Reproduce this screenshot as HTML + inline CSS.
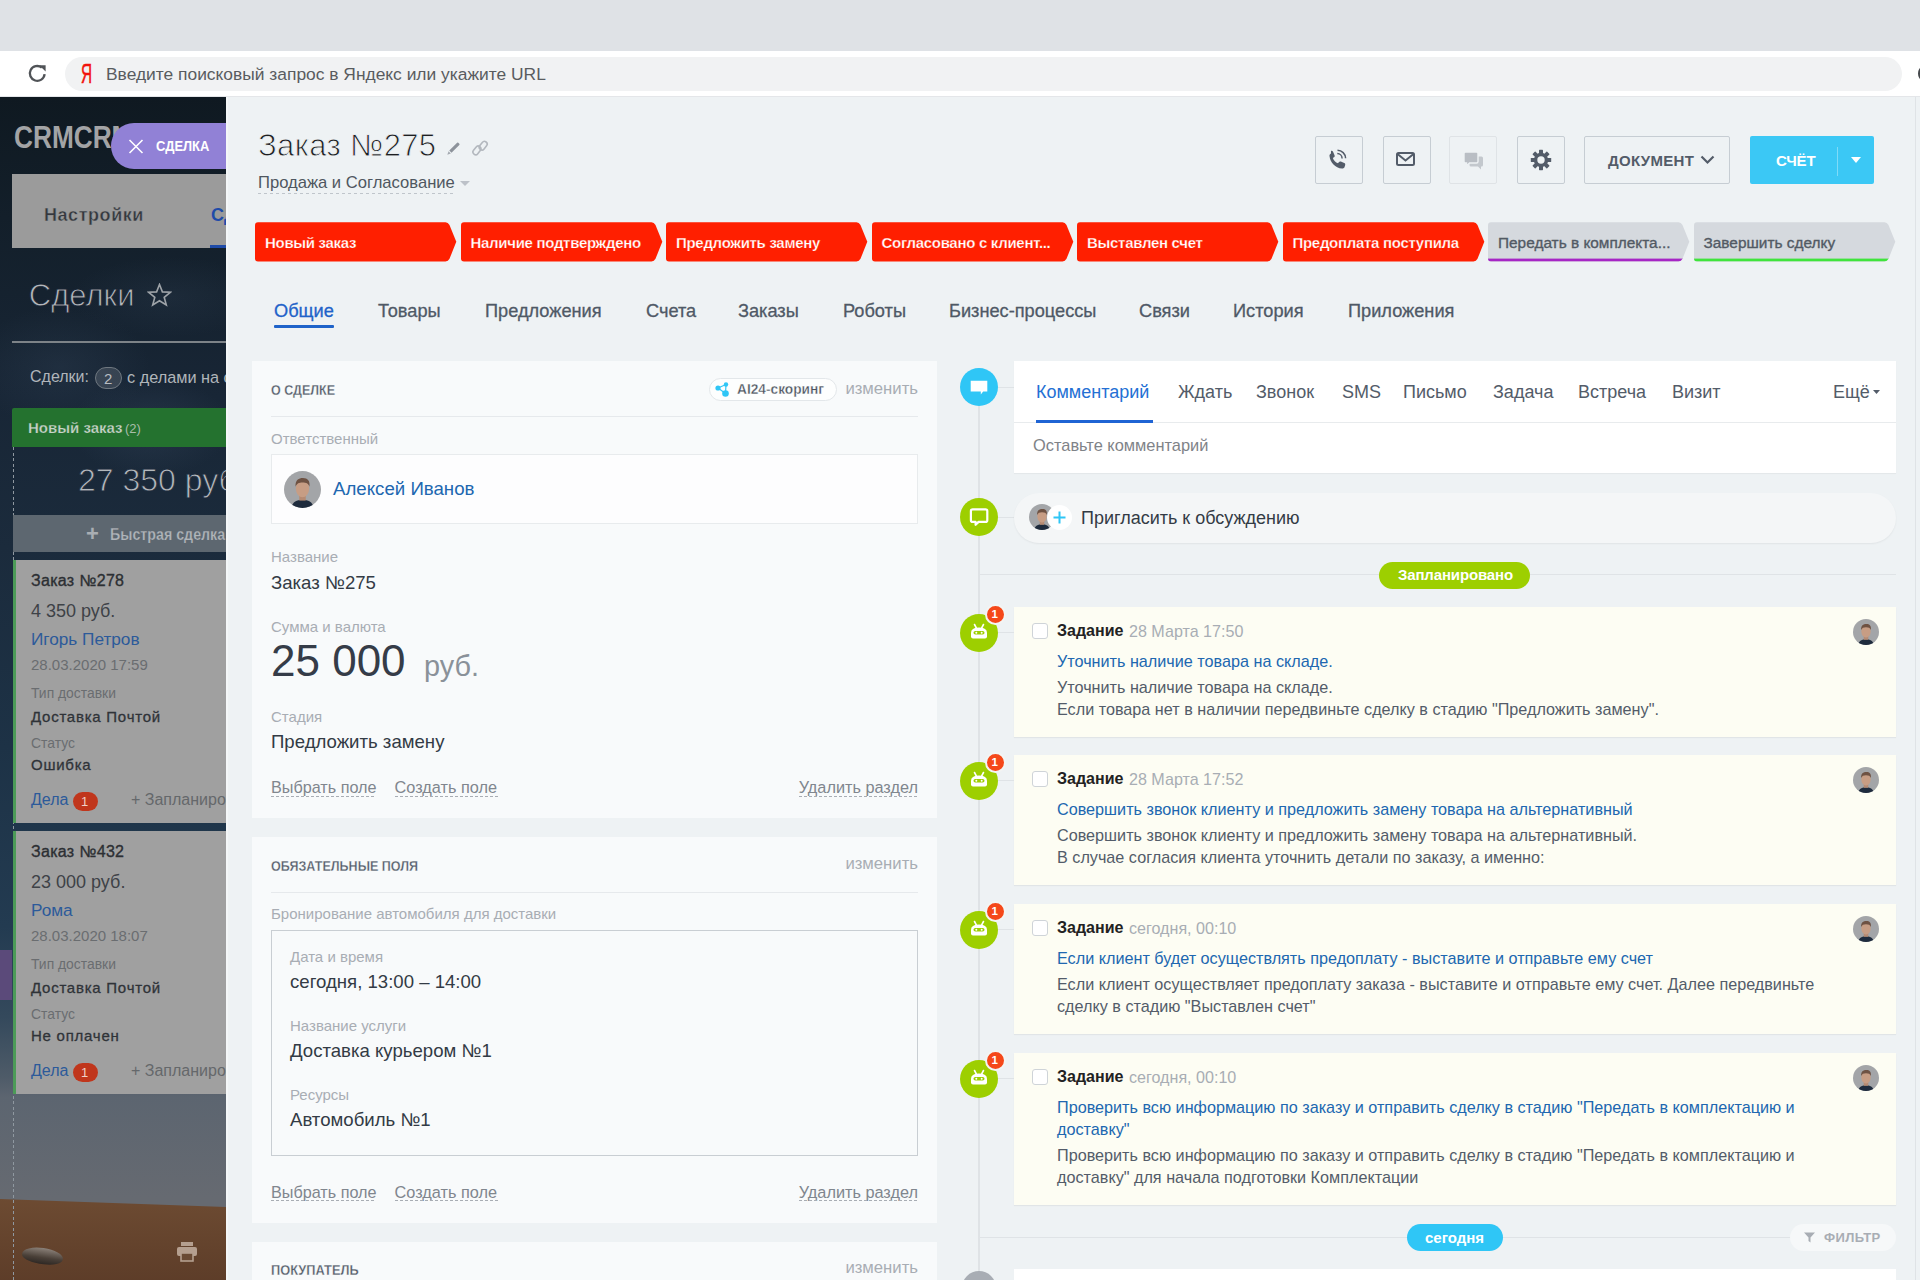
<!DOCTYPE html>
<html><head><meta charset="utf-8">
<style>
*{margin:0;padding:0;box-sizing:border-box}
html,body{width:1920px;height:1280px;overflow:hidden;font-family:"Liberation Sans",sans-serif;background:#eef2f4}
.a{position:absolute}
.t{position:absolute;line-height:1;white-space:nowrap}
svg{position:absolute}
</style></head><body>
<div class="a" style="left:0px;top:0px;width:1920px;height:51px;background:#dfe2e6"></div>
<div class="a" style="left:0px;top:51px;width:1920px;height:46px;background:#fff"></div>
<div class="a" style="left:0px;top:96px;width:1920px;height:1px;background:#e4e6e9"></div>
<div class="a" style="left:65px;top:57px;width:1837px;height:34px;border-radius:17px;background:#f1f2f3"></div>
<div class="a" style="left:1918px;top:67px;width:8px;height:13px;border-radius:50%;background:#45484c"></div>
<svg style="left:27px;top:62px" width="22" height="22" viewBox="0 0 22 22"><path d="M17.6 12.2A7.4 7.4 0 1 1 14.8 5.6" fill="none" stroke="#505357" stroke-width="2.3"/><path d="M12.2 3.2L18.6 3.2L18.6 9.6Z" fill="#505357"/></svg>
<div class="t" style="left:81.3px;top:60.02px;font-size:27.5px;color:#f2120c;font-weight:normal;transform:scaleX(0.56);transform-origin:left;-webkit-text-stroke:0.5px #f2120c">Я</div>
<div class="t" style="left:106px;top:66.27px;font-size:17.4px;color:#595c60;font-weight:normal;">Введите поисковый запрос в Яндекс или укажите URL</div>
<div class="a" style="left:0;top:97px;width:226px;height:1183px;overflow:hidden;background:
radial-gradient(ellipse 80px 50px at 150px 330px, rgba(70,90,115,0.25), transparent),
radial-gradient(ellipse 90px 60px at 60px 270px, rgba(70,90,115,0.18), transparent),
radial-gradient(ellipse 100px 40px at 170px 200px, rgba(70,90,115,0.15), transparent),
linear-gradient(180deg,#0f1921 0px,#131f2a 120px,#182636 300px,#1b2b3c 450px,#1d3246 650px,#233b51 830px,#34495c 920px,#4e5b68 980px,#5c6570 1000px,#666a71 1100px)">
<div class="a" style="left:0;top:1100px;width:226px;height:90px;background:linear-gradient(180deg,#6d4b32,#5c3c28);clip-path:polygon(0 2px,226px 10px,226px 90px,0 90px)"></div>
</div>
<div class="t" style="left:14px;top:121.68px;font-size:30.5px;color:#a3a4a6;font-weight:bold;transform:scaleX(0.86);transform-origin:left">CRMCRM24</div>
<div class="a" style="left:12px;top:174px;width:214px;height:74px;background:#9b9b9b"></div>
<div class="t" style="left:44px;top:205.76px;font-size:18px;color:#34383e;font-weight:bold;letter-spacing:0.55px;-webkit-text-stroke:0.4px #9b9b9b">Настройки</div>
<div class="t" style="left:211px;top:205.76px;font-size:18px;color:#1f4ba8;font-weight:bold;">Сделки</div>
<div class="a" style="left:210px;top:245px;width:16px;height:3px;background:#1f4ba8"></div>
<div class="t" style="left:28.8px;top:279.76px;font-size:31px;color:#b3b7bb;font-weight:normal;-webkit-text-stroke:0.9px #172433">Сделки</div>
<svg style="left:147px;top:283px" width="25" height="24" viewBox="0 0 25 24"><path d="M12.5 1.5L15.4 8.9L23.3 9.3L17.2 14.3L19.3 22L12.5 17.7L5.7 22L7.8 14.3L1.7 9.3L9.6 8.9Z" fill="none" stroke="#9ea3a8" stroke-width="1.6"/></svg>
<div class="a" style="left:12px;top:341px;width:214px;height:2px;background:#7d8388"></div>
<div class="t" style="left:30px;top:369.46px;font-size:16px;color:#b0b5ba;font-weight:normal;">Сделки:</div>
<div class="a" style="left:95px;top:367px;width:27px;height:22px;border:1px solid #6f7880;border-radius:11px;background:rgba(255,255,255,0.13)"></div>
<div class="t" style="left:104px;top:371.30px;font-size:15px;color:#b8bdc2;font-weight:normal;">2</div>
<div class="t" style="left:127px;top:369.20px;font-size:16.3px;color:#b0b5ba;font-weight:normal;">с делами на сегодня</div>
<div class="a" style="left:12px;top:408px;width:214px;height:39px;background:#24722f;border-radius:2px 0 0 0"></div>
<div class="t" style="left:28px;top:420.30px;font-size:15px;color:#c8d3c9;font-weight:bold;-webkit-text-stroke:0.25px #24722f">Новый заказ</div>
<div class="t" style="left:125px;top:422.00px;font-size:13px;color:#a9bdaa;font-weight:normal;">(2)</div>
<div class="a" style="left:13px;top:447px;width:1px;height:833px;background:repeating-linear-gradient(180deg,#8f98a0 0 3px,transparent 3px 5.5px)"></div>
<div class="t" style="left:78px;top:463.91px;font-size:32px;color:#b3b8bc;font-weight:normal;-webkit-text-stroke:0.9px #1c2b3c">27 350 руб</div>
<div class="a" style="left:13px;top:515px;width:213px;height:37px;background:#5d6770"></div>
<div class="t" style="left:86px;top:523.38px;font-size:22px;color:#a9aeb3;font-weight:bold;">+</div>
<div class="t" style="left:110px;top:527.46px;font-size:16px;color:#b0b5ba;font-weight:bold;transform:scaleX(0.89);transform-origin:left;-webkit-text-stroke:0.25px #5d6770">Быстрая сделка</div>
<div class="a" style="left:0px;top:950px;width:12px;height:50px;background:#5b4a7a"></div>
<div class="a" style="left:13px;top:560px;width:213px;height:263px;background:#a0a0a0;border-left:3px solid #4c9b58"></div>
<div class="t" style="left:31px;top:573.26px;font-size:16px;color:#2c2f33;font-weight:normal;-webkit-text-stroke:0.35px #2c2f33;letter-spacing:0.3px">Заказ №278</div>
<div class="t" style="left:31px;top:602.06px;font-size:18px;color:#3e4247;font-weight:normal;">4 350 руб.</div>
<div class="t" style="left:31px;top:630.94px;font-size:17.2px;color:#2c5a9a;font-weight:normal;">Игорь Петров</div>
<div class="t" style="left:31px;top:656.60px;font-size:15px;color:#6a6d70;font-weight:normal;">28.03.2020 17:59</div>
<div class="t" style="left:31px;top:687.23px;font-size:13.9px;color:#6a6d70;font-weight:normal;">Тип доставки</div>
<div class="t" style="left:31px;top:708.50px;font-size:15px;color:#2f3338;font-weight:normal;-webkit-text-stroke:0.3px #2f3338;letter-spacing:0.75px">Доставка Почтой</div>
<div class="t" style="left:31px;top:736.53px;font-size:13.9px;color:#6a6d70;font-weight:normal;">Статус</div>
<div class="t" style="left:31px;top:757.30px;font-size:15px;color:#2f3338;font-weight:normal;-webkit-text-stroke:0.3px #2f3338;letter-spacing:0.75px">Ошибка</div>
<div class="t" style="left:31px;top:792.46px;font-size:16px;color:#2c5a9a;font-weight:normal;">Дела</div>
<div class="a" style="left:73px;top:791.5px;width:25px;height:19.5px;border-radius:10px;background:#c0361c"></div>
<div class="t" style="left:81px;top:794.50px;font-size:13px;color:#f0d0c8;font-weight:normal;">1</div>
<div class="t" style="left:131px;top:792.46px;font-size:16px;color:#65686b;font-weight:normal;">+ Запланировать</div>
<div class="a" style="left:13px;top:831px;width:213px;height:263px;background:#a0a0a0;border-left:3px solid #4c9b58"></div>
<div class="t" style="left:31px;top:844.26px;font-size:16px;color:#2c2f33;font-weight:normal;-webkit-text-stroke:0.35px #2c2f33;letter-spacing:0.3px">Заказ №432</div>
<div class="t" style="left:31px;top:873.06px;font-size:18px;color:#3e4247;font-weight:normal;">23 000 руб.</div>
<div class="t" style="left:31px;top:901.94px;font-size:17.2px;color:#2c5a9a;font-weight:normal;">Рома</div>
<div class="t" style="left:31px;top:927.60px;font-size:15px;color:#6a6d70;font-weight:normal;">28.03.2020 18:07</div>
<div class="t" style="left:31px;top:958.23px;font-size:13.9px;color:#6a6d70;font-weight:normal;">Тип доставки</div>
<div class="t" style="left:31px;top:979.50px;font-size:15px;color:#2f3338;font-weight:normal;-webkit-text-stroke:0.3px #2f3338;letter-spacing:0.75px">Доставка Почтой</div>
<div class="t" style="left:31px;top:1007.53px;font-size:13.9px;color:#6a6d70;font-weight:normal;">Статус</div>
<div class="t" style="left:31px;top:1028.30px;font-size:15px;color:#2f3338;font-weight:normal;-webkit-text-stroke:0.3px #2f3338;letter-spacing:0.75px">Не оплачен</div>
<div class="t" style="left:31px;top:1063.46px;font-size:16px;color:#2c5a9a;font-weight:normal;">Дела</div>
<div class="a" style="left:73px;top:1062.5px;width:25px;height:19.5px;border-radius:10px;background:#c0361c"></div>
<div class="t" style="left:81px;top:1065.50px;font-size:13px;color:#f0d0c8;font-weight:normal;">1</div>
<div class="t" style="left:131px;top:1063.46px;font-size:16px;color:#65686b;font-weight:normal;">+ Запланировать</div>
<div class="a" style="left:22px;top:1248px;width:41px;height:16px;border-radius:50% 50% 45% 45%;background:linear-gradient(180deg,#8a8078,#4a4038 60%,#2e2824);transform:rotate(8deg)"></div>
<svg style="left:176px;top:1241px" width="22" height="22" viewBox="0 0 22 22"><rect x="5" y="1" width="12" height="4" fill="#b59f8f"/><rect x="1" y="6" width="20" height="9" rx="2" fill="#b59f8f"/><rect x="5" y="12" width="12" height="8" fill="#6a4a34" stroke="#b59f8f" stroke-width="1.6"/></svg>
<div class="a" style="left:226px;top:97px;width:1694px;height:1183px;background:#eef2f4"></div>
<div class="a" style="left:1915px;top:97px;width:1px;height:1183px;background:#dfe3e6"></div>
<div class="a" style="left:226px;top:97px;width:2px;height:1183px;background:#f4f7f8"></div>
<div class="a" style="left:111px;top:123px;width:115px;height:46px;border-radius:23px 0 0 23px;background:#9181d6"></div>
<svg style="left:128px;top:139px" width="16" height="15" viewBox="0 0 16 15"><path d="M1.5 1L14.5 14M14.5 1L1.5 14" stroke="#fff" stroke-width="1.6"/></svg>
<div class="t" style="left:155.8px;top:139.07px;font-size:14.8px;color:#fff;font-weight:bold;transform:scaleX(0.875);transform-origin:left">СДЕЛКА</div>
<div class="t" style="left:258px;top:129.76px;font-size:31px;color:#1d1f22;font-weight:normal;letter-spacing:0.35px;-webkit-text-stroke:0.9px #eef2f4">Заказ №275</div>
<svg style="left:445px;top:139px" width="16" height="16" viewBox="0 0 16 16"><path d="M4.3 11.5L12.1 3.7Q12.7 3.1 13.3 3.7L14.3 4.7Q14.9 5.3 14.3 5.9L6.5 13.7Z" fill="#8d939b"/><path d="M2.3 15.7L3.6 12.2L5.8 14.4Z" fill="#a4a9b0"/></svg>
<svg style="left:471px;top:139px" width="18" height="18" viewBox="0 0 18 18"><g fill="none" stroke="#b3b8be" stroke-width="1.6"><rect x="1.2" y="8.7" width="9.4" height="5.4" rx="2.7" transform="rotate(-52 5.9 11.4)"/><rect x="7.5" y="4" width="9.4" height="5.4" rx="2.7" transform="rotate(-52 12.2 6.7)"/></g></svg>
<div class="t" style="left:258px;top:175.15px;font-size:16.6px;color:#4f5760;font-weight:normal;">Продажа и Согласование</div>
<div class="a" style="left:258px;top:193px;width:197px;height:1px;background:repeating-linear-gradient(90deg,#bfc5cb 0 3px,transparent 3px 6px)"></div>
<svg style="left:460px;top:180.5px" width="10" height="5" viewBox="0 0 10 5"><path d="M0 0L10 0L5 5Z" fill="#bcc1c8"/></svg>
<div class="a" style="left:1315px;top:136px;width:48px;height:48px;border:1px solid #c6cdd3;border-radius:2px"></div>
<div class="a" style="left:1383px;top:136px;width:48px;height:48px;border:1px solid #c6cdd3;border-radius:2px"></div>
<div class="a" style="left:1449px;top:136px;width:48px;height:48px;border:1px solid #dfe3e6;border-radius:2px"></div>
<div class="a" style="left:1517px;top:136px;width:48px;height:48px;border:1px solid #c6cdd3;border-radius:2px"></div>
<svg style="left:1325px;top:148px" width="24" height="24" viewBox="0 0 24 24"><path transform="scale(1.15)" d="M5.2 2.5C6 2.2 6.7 2.6 7 3.3L8.3 6.2C8.6 6.9 8.4 7.6 7.8 8L6.8 8.7C7.5 10.6 9.3 12.6 11.3 13.3L12 12.3C12.4 11.7 13.2 11.5 13.8 11.8L16.7 13.1C17.4 13.4 17.8 14.1 17.5 14.9L17 16.6C16.7 17.5 15.8 18 14.8 17.9C8.9 17.2 4.6 12.6 3.9 6.9C3.8 5.9 4.3 5 5.2 4.7Z" fill="#535c69"/><path d="M12.5 2.2A8.3 8.3 0 0 1 20.6 10.3" fill="none" stroke="#535c69" stroke-width="1.5"/><path d="M12.3 5.6A4.9 4.9 0 0 1 17.1 10.4" fill="none" stroke="#535c69" stroke-width="1.5"/></svg>
<svg style="left:1395px;top:151px" width="22" height="17" viewBox="0 0 22 17"><rect x="2" y="2" width="17" height="12" rx="1.5" fill="none" stroke="#535c69" stroke-width="2"/><path d="M2.5 3L10.5 9.5L18.5 3" fill="none" stroke="#535c69" stroke-width="2"/></svg>
<svg style="left:1462px;top:149px" width="24" height="22" viewBox="0 0 24 22"><path d="M9 7.5H19.5Q21 7.5 21 9V16Q21 17.5 19.5 17.5H19V20.5L16 17.5H9Q7.5 17.5 7.5 16V9Q7.5 7.5 9 7.5Z" fill="#c3c8cd"/><path d="M3.5 3H14.5Q16 3 16 4.5V12.5Q16 14 14.5 14H7.5L4.5 17V14H3.5Q2 14 2 12.5V4.5Q2 3 3.5 3Z" fill="#b9bec4" stroke="#eef2f4" stroke-width="1.4"/></svg>
<svg style="left:1529px;top:148px" width="24" height="24" viewBox="0 0 24 24"><g fill="#535c69"><circle cx="12" cy="12" r="7.2"/><rect x="10" y="1.8" width="4" height="5" rx="0.6"/><rect x="10" y="17.2" width="4" height="5" rx="0.6"/><rect x="1.8" y="10" width="5" height="4" rx="0.6"/><rect x="17.2" y="10" width="5" height="4" rx="0.6"/><rect x="10" y="1.8" width="4" height="5" rx="0.6" transform="rotate(45 12 12)"/><rect x="10" y="17.2" width="4" height="5" rx="0.6" transform="rotate(45 12 12)"/><rect x="1.8" y="10" width="5" height="4" rx="0.6" transform="rotate(45 12 12)"/><rect x="17.2" y="10" width="5" height="4" rx="0.6" transform="rotate(45 12 12)"/></g><circle cx="12" cy="12" r="3.7" fill="#eef2f4"/></svg>
<div class="a" style="left:1584px;top:136px;width:146px;height:48px;border:1px solid #c6cdd3;border-radius:2px"></div>
<div class="t" style="left:1608px;top:153.30px;font-size:15px;color:#535c69;font-weight:bold;letter-spacing:0.3px">ДОКУМЕНТ</div>
<svg style="left:1700px;top:155px" width="15" height="10" viewBox="0 0 15 10"><path d="M1.5 1.5L7.5 7.5L13.5 1.5" fill="none" stroke="#535c69" stroke-width="2.2"/></svg>
<div class="a" style="left:1750px;top:136px;width:124px;height:48px;background:#3bc8f5;border-radius:2px"></div>
<div class="t" style="left:1776px;top:153.30px;font-size:15px;color:#fff;font-weight:bold;letter-spacing:-0.2px">СЧЁТ</div>
<div class="a" style="left:1837px;top:147px;width:1px;height:29px;background:rgba(255,255,255,0.35)"></div>
<svg style="left:1851px;top:157px" width="10" height="6" viewBox="0 0 10 6"><path d="M0 0L10 0L5 6Z" fill="#fff"/></svg>
<svg style="left:255.0px;top:222px" width="203" height="40" viewBox="0 0 203 40"><defs><clipPath id="st0"><path d="M3 0.3H190.5Q193 0.3 194.5 3L201.3 19.8L194.5 36.8Q193.2 39.4 190.5 39.4H3Q0 39.4 0 36.4V3.3Q0 0.3 3 0.3Z"/></clipPath></defs><path d="M3 0.3H190.5Q193 0.3 194.5 3L201.3 19.8L194.5 36.8Q193.2 39.4 190.5 39.4H3Q0 39.4 0 36.4V3.3Q0 0.3 3 0.3Z" fill="#ff1f00"/></svg>
<div class="t" style="left:265.0px;top:234.90px;font-size:15px;color:#fff;font-weight:bold;letter-spacing:-0.3px;-webkit-text-stroke:0.25px #ff1f00">Новый заказ</div>
<svg style="left:460.5px;top:222px" width="203" height="40" viewBox="0 0 203 40"><defs><clipPath id="st1"><path d="M3 0.3H190.5Q193 0.3 194.5 3L201.3 19.8L194.5 36.8Q193.2 39.4 190.5 39.4H3Q0 39.4 0 36.4V3.3Q0 0.3 3 0.3Z"/></clipPath></defs><path d="M3 0.3H190.5Q193 0.3 194.5 3L201.3 19.8L194.5 36.8Q193.2 39.4 190.5 39.4H3Q0 39.4 0 36.4V3.3Q0 0.3 3 0.3Z" fill="#ff1f00"/></svg>
<div class="t" style="left:470.5px;top:234.90px;font-size:15px;color:#fff;font-weight:bold;letter-spacing:-0.3px;-webkit-text-stroke:0.25px #ff1f00">Наличие подтверждено</div>
<svg style="left:666.0px;top:222px" width="203" height="40" viewBox="0 0 203 40"><defs><clipPath id="st2"><path d="M3 0.3H190.5Q193 0.3 194.5 3L201.3 19.8L194.5 36.8Q193.2 39.4 190.5 39.4H3Q0 39.4 0 36.4V3.3Q0 0.3 3 0.3Z"/></clipPath></defs><path d="M3 0.3H190.5Q193 0.3 194.5 3L201.3 19.8L194.5 36.8Q193.2 39.4 190.5 39.4H3Q0 39.4 0 36.4V3.3Q0 0.3 3 0.3Z" fill="#ff1f00"/></svg>
<div class="t" style="left:676.0px;top:234.90px;font-size:15px;color:#fff;font-weight:bold;letter-spacing:-0.3px;-webkit-text-stroke:0.25px #ff1f00">Предложить замену</div>
<svg style="left:871.5px;top:222px" width="203" height="40" viewBox="0 0 203 40"><defs><clipPath id="st3"><path d="M3 0.3H190.5Q193 0.3 194.5 3L201.3 19.8L194.5 36.8Q193.2 39.4 190.5 39.4H3Q0 39.4 0 36.4V3.3Q0 0.3 3 0.3Z"/></clipPath></defs><path d="M3 0.3H190.5Q193 0.3 194.5 3L201.3 19.8L194.5 36.8Q193.2 39.4 190.5 39.4H3Q0 39.4 0 36.4V3.3Q0 0.3 3 0.3Z" fill="#ff1f00"/></svg>
<div class="t" style="left:881.5px;top:234.90px;font-size:15px;color:#fff;font-weight:bold;letter-spacing:-0.3px;-webkit-text-stroke:0.25px #ff1f00">Согласовано с клиент...</div>
<svg style="left:1077.0px;top:222px" width="203" height="40" viewBox="0 0 203 40"><defs><clipPath id="st4"><path d="M3 0.3H190.5Q193 0.3 194.5 3L201.3 19.8L194.5 36.8Q193.2 39.4 190.5 39.4H3Q0 39.4 0 36.4V3.3Q0 0.3 3 0.3Z"/></clipPath></defs><path d="M3 0.3H190.5Q193 0.3 194.5 3L201.3 19.8L194.5 36.8Q193.2 39.4 190.5 39.4H3Q0 39.4 0 36.4V3.3Q0 0.3 3 0.3Z" fill="#ff1f00"/></svg>
<div class="t" style="left:1087.0px;top:234.90px;font-size:15px;color:#fff;font-weight:bold;letter-spacing:-0.3px;-webkit-text-stroke:0.25px #ff1f00">Выставлен счет</div>
<svg style="left:1282.5px;top:222px" width="203" height="40" viewBox="0 0 203 40"><defs><clipPath id="st5"><path d="M3 0.3H190.5Q193 0.3 194.5 3L201.3 19.8L194.5 36.8Q193.2 39.4 190.5 39.4H3Q0 39.4 0 36.4V3.3Q0 0.3 3 0.3Z"/></clipPath></defs><path d="M3 0.3H190.5Q193 0.3 194.5 3L201.3 19.8L194.5 36.8Q193.2 39.4 190.5 39.4H3Q0 39.4 0 36.4V3.3Q0 0.3 3 0.3Z" fill="#ff1f00"/></svg>
<div class="t" style="left:1292.5px;top:234.90px;font-size:15px;color:#fff;font-weight:bold;letter-spacing:-0.3px;-webkit-text-stroke:0.25px #ff1f00">Предоплата поступила</div>
<svg style="left:1488.0px;top:222px" width="203" height="40" viewBox="0 0 203 40"><defs><clipPath id="st6"><path d="M3 0.3H190.5Q193 0.3 194.5 3L201.3 19.8L194.5 36.8Q193.2 39.4 190.5 39.4H3Q0 39.4 0 36.4V3.3Q0 0.3 3 0.3Z"/></clipPath></defs><path d="M3 0.3H190.5Q193 0.3 194.5 3L201.3 19.8L194.5 36.8Q193.2 39.4 190.5 39.4H3Q0 39.4 0 36.4V3.3Q0 0.3 3 0.3Z" fill="#d5d9de"/><rect x="0" y="36.6" width="203" height="3" fill="#a626c5" clip-path="url(#st6)"/></svg>
<div class="t" style="left:1498.0px;top:235.16px;font-size:15.4px;color:#525a64;font-weight:normal;-webkit-text-stroke:0.35px #525a64">Передать в комплекта...</div>
<svg style="left:1693.5px;top:222px" width="203" height="40" viewBox="0 0 203 40"><defs><clipPath id="st7"><path d="M3 0.3H190.5Q193 0.3 194.5 3L201.3 19.8L194.5 36.8Q193.2 39.4 190.5 39.4H3Q0 39.4 0 36.4V3.3Q0 0.3 3 0.3Z"/></clipPath></defs><path d="M3 0.3H190.5Q193 0.3 194.5 3L201.3 19.8L194.5 36.8Q193.2 39.4 190.5 39.4H3Q0 39.4 0 36.4V3.3Q0 0.3 3 0.3Z" fill="#d5d9de"/><rect x="0" y="36.6" width="203" height="3" fill="#3fe43c" clip-path="url(#st7)"/></svg>
<div class="t" style="left:1703.5px;top:235.16px;font-size:15.4px;color:#525a64;font-weight:normal;-webkit-text-stroke:0.35px #525a64">Завершить сделку</div>
<div class="t" style="left:274px;top:302.09px;font-size:18.2px;color:#1f63c9;font-weight:normal;-webkit-text-stroke:0.3px #1f63c9">Общие</div>
<div class="t" style="left:378px;top:302.09px;font-size:18.2px;color:#4f5966;font-weight:normal;-webkit-text-stroke:0.3px #4f5966">Товары</div>
<div class="t" style="left:485px;top:302.09px;font-size:18.2px;color:#4f5966;font-weight:normal;-webkit-text-stroke:0.3px #4f5966">Предложения</div>
<div class="t" style="left:646px;top:302.09px;font-size:18.2px;color:#4f5966;font-weight:normal;-webkit-text-stroke:0.3px #4f5966">Счета</div>
<div class="t" style="left:738px;top:302.09px;font-size:18.2px;color:#4f5966;font-weight:normal;-webkit-text-stroke:0.3px #4f5966">Заказы</div>
<div class="t" style="left:843px;top:302.09px;font-size:18.2px;color:#4f5966;font-weight:normal;-webkit-text-stroke:0.3px #4f5966">Роботы</div>
<div class="t" style="left:949px;top:302.09px;font-size:18.2px;color:#4f5966;font-weight:normal;-webkit-text-stroke:0.3px #4f5966">Бизнес-процессы</div>
<div class="t" style="left:1139px;top:302.09px;font-size:18.2px;color:#4f5966;font-weight:normal;-webkit-text-stroke:0.3px #4f5966">Связи</div>
<div class="t" style="left:1233px;top:302.09px;font-size:18.2px;color:#4f5966;font-weight:normal;-webkit-text-stroke:0.3px #4f5966">История</div>
<div class="t" style="left:1348px;top:302.09px;font-size:18.2px;color:#4f5966;font-weight:normal;-webkit-text-stroke:0.3px #4f5966">Приложения</div>
<div class="a" style="left:274px;top:325px;width:60px;height:3px;background:#1f63c9;border-radius:1px"></div>
<div class="a" style="left:252px;top:361px;width:685px;height:457px;background:#f8fafb"></div>
<div class="t" style="left:271px;top:382.00px;font-size:15px;color:#535c69;font-weight:bold;transform:scaleX(0.833);transform-origin:left;-webkit-text-stroke:0.3px #f8fafb">О СДЕЛКЕ</div>
<div class="a" style="left:708.5px;top:377.5px;width:128.5px;height:23px;border:1px solid #e3e7ea;border-radius:12px;background:#fdfefe"></div>
<svg style="left:714px;top:381px" width="17" height="17" viewBox="0 0 17 17"><g fill="#2fc6f6"><circle cx="4" cy="7" r="2.6"/><circle cx="12" cy="3.5" r="2.2"/><circle cx="11.5" cy="12.5" r="3.3"/></g><path d="M4 7L12 3.5M4 7L11.5 12.5M12 3.5L11.5 12.5" stroke="#2fc6f6" stroke-width="1.2"/></svg>
<div class="t" style="left:737px;top:382.23px;font-size:14.5px;color:#4a525d;font-weight:bold;transform:scaleX(0.946);transform-origin:left;-webkit-text-stroke:0.35px #fdfefe">AI24-скоринг</div>
<div class="t" style="right:1002px;top:381.36px;font-size:16.7px;color:#a8adb4;font-weight:normal;">изменить</div>
<div class="a" style="left:271px;top:416px;width:647px;height:1px;background:#e6e9ec"></div>
<div class="t" style="left:271px;top:431.30px;font-size:15px;color:#a8adb4;font-weight:normal;">Ответственный</div>
<div class="a" style="left:271px;top:454px;width:647px;height:70px;background:#fdfdfe;border:1px solid #e8ebed"></div>
<svg style="left:284px;top:471px" width="37" height="37" viewBox="0 0 40 40"><defs><clipPath id="av1"><circle cx="20" cy="20" r="20"/></clipPath></defs><g clip-path="url(#av1)"><rect width="40" height="40" fill="#a3a5a8"/><path d="M8 40C9 33 14 31 20 31C26 31 31 33 32 40Z" fill="#1e2b3d"/><rect x="16.5" y="25" width="7" height="7" fill="#b58a72"/><ellipse cx="20" cy="19" rx="7.2" ry="9.5" fill="#c79d84"/><path d="M12.5 17C12 9.5 16 7.5 20.5 7.5C25.5 7.5 28.5 10.5 27.5 17C26.5 13.5 24 12.5 20 12.5C16 12.5 14 13.5 12.5 17Z" fill="#6e5243"/></g></svg>
<div class="t" style="left:333px;top:480.20px;font-size:18.66px;color:#2067b0;font-weight:normal;">Алексей Иванов</div>
<div class="t" style="left:271px;top:549.30px;font-size:15px;color:#a8adb4;font-weight:normal;">Название</div>
<div class="t" style="left:271px;top:574.26px;font-size:18.6px;color:#333b45;font-weight:normal;">Заказ №275</div>
<div class="t" style="left:271px;top:619.30px;font-size:15px;color:#a8adb4;font-weight:normal;">Сумма и валюта</div>
<div class="t" style="left:271px;top:638.75px;font-size:44px;color:#353c48;font-weight:normal;">25 000</div>
<div class="t" style="left:424px;top:651.58px;font-size:28.85px;color:#8a9199;font-weight:normal;">руб.</div>
<div class="t" style="left:271px;top:709.30px;font-size:15px;color:#a8adb4;font-weight:normal;">Стадия</div>
<div class="t" style="left:271px;top:733.26px;font-size:18.6px;color:#333b45;font-weight:normal;">Предложить замену</div>
<div class="t" style="left:271px;top:779.29px;font-size:16.2px;color:#80868e;font-weight:normal;">Выбрать поле</div>
<div class="a" style="left:271px;top:795.7px;width:105px;height:1px;background:repeating-linear-gradient(90deg,#a8adb4 0 3px,transparent 3px 5px)"></div>
<div class="t" style="left:394.5px;top:779.20px;font-size:16.3px;color:#80868e;font-weight:normal;">Создать поле</div>
<div class="a" style="left:394.5px;top:795.7px;width:103px;height:1px;background:repeating-linear-gradient(90deg,#a8adb4 0 3px,transparent 3px 5px)"></div>
<div class="t" style="right:1002px;top:779.20px;font-size:16.3px;color:#80868e;font-weight:normal;">Удалить раздел</div>
<div class="a" style="left:799px;top:795.7px;width:119px;height:1px;background:repeating-linear-gradient(90deg,#a8adb4 0 3px,transparent 3px 5px)"></div>
<div class="a" style="left:252px;top:837px;width:685px;height:386px;background:#f8fafb"></div>
<div class="t" style="left:271px;top:857.50px;font-size:15px;color:#535c69;font-weight:bold;transform:scaleX(0.836);transform-origin:left;-webkit-text-stroke:0.3px #f8fafb">ОБЯЗАТЕЛЬНЫЕ ПОЛЯ</div>
<div class="t" style="right:1002px;top:856.36px;font-size:16.7px;color:#a8adb4;font-weight:normal;">изменить</div>
<div class="a" style="left:271px;top:892px;width:647px;height:1px;background:#e6e9ec"></div>
<div class="t" style="left:271px;top:906.30px;font-size:15px;color:#a8adb4;font-weight:normal;">Бронирование автомобиля для доставки</div>
<div class="a" style="left:271px;top:930px;width:647px;height:226px;border:1px solid #c9ced3"></div>
<div class="t" style="left:290px;top:949.30px;font-size:15px;color:#a8adb4;font-weight:normal;">Дата и время</div>
<div class="t" style="left:290px;top:973.26px;font-size:18.6px;color:#333b45;font-weight:normal;">сегодня, 13:00 – 14:00</div>
<div class="t" style="left:290px;top:1018.30px;font-size:15px;color:#a8adb4;font-weight:normal;">Название услуги</div>
<div class="t" style="left:290px;top:1042.26px;font-size:18.6px;color:#333b45;font-weight:normal;">Доставка курьером №1</div>
<div class="t" style="left:290px;top:1087.30px;font-size:15px;color:#a8adb4;font-weight:normal;">Ресурсы</div>
<div class="t" style="left:290px;top:1111.26px;font-size:18.6px;color:#333b45;font-weight:normal;">Автомобиль №1</div>
<div class="t" style="left:271px;top:1183.79px;font-size:16.2px;color:#80868e;font-weight:normal;">Выбрать поле</div>
<div class="a" style="left:271px;top:1200.2px;width:105px;height:1px;background:repeating-linear-gradient(90deg,#a8adb4 0 3px,transparent 3px 5px)"></div>
<div class="t" style="left:394.5px;top:1183.70px;font-size:16.3px;color:#80868e;font-weight:normal;">Создать поле</div>
<div class="a" style="left:394.5px;top:1200.2px;width:103px;height:1px;background:repeating-linear-gradient(90deg,#a8adb4 0 3px,transparent 3px 5px)"></div>
<div class="t" style="right:1002px;top:1183.70px;font-size:16.3px;color:#80868e;font-weight:normal;">Удалить раздел</div>
<div class="a" style="left:799px;top:1200.2px;width:119px;height:1px;background:repeating-linear-gradient(90deg,#a8adb4 0 3px,transparent 3px 5px)"></div>
<div class="a" style="left:252px;top:1242px;width:685px;height:60px;background:#f8fafb"></div>
<div class="t" style="left:271px;top:1262.00px;font-size:15px;color:#535c69;font-weight:bold;transform:scaleX(0.854);transform-origin:left;-webkit-text-stroke:0.3px #f8fafb">ПОКУПАТЕЛЬ</div>
<div class="t" style="right:1002px;top:1259.86px;font-size:16.7px;color:#a8adb4;font-weight:normal;">изменить</div>
<div class="a" style="left:978px;top:387px;width:2px;height:893px;background:#dfe3e6"></div>
<div class="a" style="left:998px;top:387px;width:16px;height:1px;background:#dfe3e6"></div>
<div class="a" style="left:998px;top:517px;width:16px;height:1px;background:#dfe3e6"></div>
<div class="a" style="left:960px;top:368px;width:38px;height:38px;border-radius:50%;background:#2fc6f6"></div>
<svg style="left:969px;top:378px" width="20" height="18" viewBox="0 0 20 18"><path d="M1.7 2.8H18.3V13.6H14.2L11.8 16.4V13.6H1.7Z" fill="#fff"/></svg>
<div class="a" style="left:1014px;top:361px;width:882px;height:112px;background:#fff;box-shadow:0 1px 1px rgba(0,0,0,0.04)"></div>
<div class="t" style="left:1036px;top:383.26px;font-size:18px;color:#2470d4;font-weight:normal;">Комментарий</div>
<div class="t" style="left:1178px;top:383.26px;font-size:18px;color:#535c69;font-weight:normal;">Ждать</div>
<div class="t" style="left:1256px;top:383.26px;font-size:18px;color:#535c69;font-weight:normal;">Звонок</div>
<div class="t" style="left:1342px;top:383.26px;font-size:18px;color:#535c69;font-weight:normal;">SMS</div>
<div class="t" style="left:1403px;top:383.26px;font-size:18px;color:#535c69;font-weight:normal;">Письмо</div>
<div class="t" style="left:1493px;top:383.26px;font-size:18px;color:#535c69;font-weight:normal;">Задача</div>
<div class="t" style="left:1578px;top:383.26px;font-size:18px;color:#535c69;font-weight:normal;">Встреча</div>
<div class="t" style="left:1672px;top:383.26px;font-size:18px;color:#535c69;font-weight:normal;">Визит</div>
<div class="t" style="left:1833px;top:383.26px;font-size:18px;color:#535c69;font-weight:normal;">Ещё</div>
<svg style="left:1873px;top:390px" width="7" height="4" viewBox="0 0 7 4"><path d="M0 0H7L3.5 4Z" fill="#535c69"/></svg>
<div class="a" style="left:1014px;top:422px;width:882px;height:1px;background:#e8ebed"></div>
<div class="a" style="left:1036px;top:420px;width:117px;height:3px;background:#1f64d4"></div>
<div class="t" style="left:1033px;top:437.42px;font-size:16.4px;color:#7f8388;font-weight:normal;">Оставьте комментарий</div>
<div class="a" style="left:960px;top:498px;width:38px;height:38px;border-radius:50%;background:#9dcf00"></div>
<svg style="left:969px;top:508px" width="20" height="19" viewBox="0 0 20 19"><path d="M3.6 1.4H16.6Q18.3 1.4 18.3 3.1V12.2Q18.3 13.9 16.6 13.9H9.6L6.6 16.8V13.9H3.6Q1.9 13.9 1.9 12.2V3.1Q1.9 1.4 3.6 1.4Z" fill="none" stroke="#fff" stroke-width="2.2" stroke-linejoin="round"/></svg>
<div class="a" style="left:1014px;top:493px;width:882px;height:50px;border-radius:25px;background:#f4f6f7;box-shadow:0 1px 2px rgba(0,0,0,0.06)"></div>
<svg style="left:1029px;top:504px" width="26" height="26" viewBox="0 0 40 40"><defs><clipPath id="av2"><circle cx="20" cy="20" r="20"/></clipPath></defs><g clip-path="url(#av2)"><rect width="40" height="40" fill="#a3a5a8"/><path d="M8 40C9 33 14 31 20 31C26 31 31 33 32 40Z" fill="#1e2b3d"/><rect x="16.5" y="25" width="7" height="7" fill="#b58a72"/><ellipse cx="20" cy="19" rx="7.2" ry="9.5" fill="#c79d84"/><path d="M12.5 17C12 9.5 16 7.5 20.5 7.5C25.5 7.5 28.5 10.5 27.5 17C26.5 13.5 24 12.5 20 12.5C16 12.5 14 13.5 12.5 17Z" fill="#6e5243"/></g></svg>
<div class="a" style="left:1047px;top:505px;width:25px;height:25px;border-radius:50%;background:#fff"></div>
<svg style="left:1052px;top:510px" width="15" height="15" viewBox="0 0 15 15"><path d="M7.5 1.5V13.5M1.5 7.5H13.5" stroke="#2fc6f6" stroke-width="2"/></svg>
<div class="t" style="left:1081px;top:508.76px;font-size:18px;color:#333b45;font-weight:normal;">Пригласить к обсуждению</div>
<div class="a" style="left:979px;top:574px;width:917px;height:1px;background:#dfe3e6"></div>
<div class="a" style="left:1379px;top:562px;width:151px;height:27px;border-radius:14px;background:#9dcf00"></div>
<div class="t" style="left:1398px;top:567.30px;font-size:15px;color:#fff;font-weight:bold;letter-spacing:-0.15px">Запланировано</div>
<div class="a" style="left:1014px;top:607px;width:882px;height:130px;background:#fdfdf3;box-shadow:0 1px 1px rgba(0,0,0,0.05)"></div>
<div class="a" style="left:998px;top:632px;width:16px;height:1px;background:#dfe3e6"></div>
<div class="a" style="left:960px;top:613.5px;width:38px;height:38px;border-radius:50%;background:#9dcf00"></div>
<svg style="left:969px;top:623px" width="20" height="18" viewBox="0 0 20 18"><path d="M5.5 1.5L7.3 4.8M14.5 1.5L12.7 4.8" stroke="#fff" stroke-width="1.6" stroke-linecap="round"/><path d="M2 10Q2 4.5 10 4.5Q18 4.5 18 10V13.5Q18 15.5 16 15.5H4Q2 15.5 2 13.5Z" fill="#fff"/><rect x="4.5" y="8" width="11" height="3.6" rx="1.8" fill="#9dcf00"/><circle cx="7.3" cy="9.8" r="1" fill="#fff"/><circle cx="12.7" cy="9.8" r="1" fill="#fff"/></svg>
<div class="a" style="left:985px;top:604px;width:21px;height:21px;border-radius:50%;background:#f54819;border:2px solid #f3f5f3"></div>
<div class="t" style="left:991.5px;top:609.27px;font-size:11.5px;color:#fff;font-weight:bold;">1</div>
<div class="a" style="left:1032px;top:623px;width:16px;height:16px;border:1px solid #cfd4d8;border-radius:3px;background:#fff"></div>
<div class="t" style="left:1057px;top:623.26px;font-size:16px;color:#222;font-weight:bold;">Задание</div>
<div class="t" style="left:1129px;top:623.17px;font-size:16.1px;color:#a8adb4;font-weight:normal;">28 Марта 17:50</div>
<div class="t" style="left:1057px;top:652.79px;font-size:16.2px;color:#2067b0;font-weight:normal;">Уточнить наличие товара на складе.</div>
<div class="t" style="left:1057px;top:679.29px;font-size:16.2px;color:#535c69;font-weight:normal;">Уточнить наличие товара на складе.</div>
<div class="t" style="left:1057px;top:701.29px;font-size:16.2px;color:#535c69;font-weight:normal;">Если товара нет в наличии передвиньте сделку в стадию "Предложить замену".</div>
<svg style="left:1853px;top:619px" width="26" height="26" viewBox="0 0 40 40"><defs><clipPath id="avt607"><circle cx="20" cy="20" r="20"/></clipPath></defs><g clip-path="url(#avt607)"><rect width="40" height="40" fill="#a3a5a8"/><path d="M8 40C9 33 14 31 20 31C26 31 31 33 32 40Z" fill="#1e2b3d"/><rect x="16.5" y="25" width="7" height="7" fill="#b58a72"/><ellipse cx="20" cy="19" rx="7.2" ry="9.5" fill="#c79d84"/><path d="M12.5 17C12 9.5 16 7.5 20.5 7.5C25.5 7.5 28.5 10.5 27.5 17C26.5 13.5 24 12.5 20 12.5C16 12.5 14 13.5 12.5 17Z" fill="#6e5243"/></g></svg>
<div class="a" style="left:1014px;top:755px;width:882px;height:130px;background:#fdfdf3;box-shadow:0 1px 1px rgba(0,0,0,0.05)"></div>
<div class="a" style="left:998px;top:780px;width:16px;height:1px;background:#dfe3e6"></div>
<div class="a" style="left:960px;top:761.5px;width:38px;height:38px;border-radius:50%;background:#9dcf00"></div>
<svg style="left:969px;top:771px" width="20" height="18" viewBox="0 0 20 18"><path d="M5.5 1.5L7.3 4.8M14.5 1.5L12.7 4.8" stroke="#fff" stroke-width="1.6" stroke-linecap="round"/><path d="M2 10Q2 4.5 10 4.5Q18 4.5 18 10V13.5Q18 15.5 16 15.5H4Q2 15.5 2 13.5Z" fill="#fff"/><rect x="4.5" y="8" width="11" height="3.6" rx="1.8" fill="#9dcf00"/><circle cx="7.3" cy="9.8" r="1" fill="#fff"/><circle cx="12.7" cy="9.8" r="1" fill="#fff"/></svg>
<div class="a" style="left:985px;top:752px;width:21px;height:21px;border-radius:50%;background:#f54819;border:2px solid #f3f5f3"></div>
<div class="t" style="left:991.5px;top:757.27px;font-size:11.5px;color:#fff;font-weight:bold;">1</div>
<div class="a" style="left:1032px;top:771px;width:16px;height:16px;border:1px solid #cfd4d8;border-radius:3px;background:#fff"></div>
<div class="t" style="left:1057px;top:771.26px;font-size:16px;color:#222;font-weight:bold;">Задание</div>
<div class="t" style="left:1129px;top:771.17px;font-size:16.1px;color:#a8adb4;font-weight:normal;">28 Марта 17:52</div>
<div class="t" style="left:1057px;top:800.79px;font-size:16.2px;color:#2067b0;font-weight:normal;">Совершить звонок клиенту и предложить замену товара на альтернативный</div>
<div class="t" style="left:1057px;top:827.29px;font-size:16.2px;color:#535c69;font-weight:normal;">Совершить звонок клиенту и предложить замену товара на альтернативный.</div>
<div class="t" style="left:1057px;top:849.29px;font-size:16.2px;color:#535c69;font-weight:normal;">В случае согласия клиента уточнить детали по заказу, а именно:</div>
<svg style="left:1853px;top:767px" width="26" height="26" viewBox="0 0 40 40"><defs><clipPath id="avt755"><circle cx="20" cy="20" r="20"/></clipPath></defs><g clip-path="url(#avt755)"><rect width="40" height="40" fill="#a3a5a8"/><path d="M8 40C9 33 14 31 20 31C26 31 31 33 32 40Z" fill="#1e2b3d"/><rect x="16.5" y="25" width="7" height="7" fill="#b58a72"/><ellipse cx="20" cy="19" rx="7.2" ry="9.5" fill="#c79d84"/><path d="M12.5 17C12 9.5 16 7.5 20.5 7.5C25.5 7.5 28.5 10.5 27.5 17C26.5 13.5 24 12.5 20 12.5C16 12.5 14 13.5 12.5 17Z" fill="#6e5243"/></g></svg>
<div class="a" style="left:1014px;top:904px;width:882px;height:130px;background:#fdfdf3;box-shadow:0 1px 1px rgba(0,0,0,0.05)"></div>
<div class="a" style="left:998px;top:929px;width:16px;height:1px;background:#dfe3e6"></div>
<div class="a" style="left:960px;top:910.5px;width:38px;height:38px;border-radius:50%;background:#9dcf00"></div>
<svg style="left:969px;top:920px" width="20" height="18" viewBox="0 0 20 18"><path d="M5.5 1.5L7.3 4.8M14.5 1.5L12.7 4.8" stroke="#fff" stroke-width="1.6" stroke-linecap="round"/><path d="M2 10Q2 4.5 10 4.5Q18 4.5 18 10V13.5Q18 15.5 16 15.5H4Q2 15.5 2 13.5Z" fill="#fff"/><rect x="4.5" y="8" width="11" height="3.6" rx="1.8" fill="#9dcf00"/><circle cx="7.3" cy="9.8" r="1" fill="#fff"/><circle cx="12.7" cy="9.8" r="1" fill="#fff"/></svg>
<div class="a" style="left:985px;top:901px;width:21px;height:21px;border-radius:50%;background:#f54819;border:2px solid #f3f5f3"></div>
<div class="t" style="left:991.5px;top:906.27px;font-size:11.5px;color:#fff;font-weight:bold;">1</div>
<div class="a" style="left:1032px;top:920px;width:16px;height:16px;border:1px solid #cfd4d8;border-radius:3px;background:#fff"></div>
<div class="t" style="left:1057px;top:920.26px;font-size:16px;color:#222;font-weight:bold;">Задание</div>
<div class="t" style="left:1129px;top:920.17px;font-size:16.1px;color:#a8adb4;font-weight:normal;">сегодня, 00:10</div>
<div class="t" style="left:1057px;top:949.79px;font-size:16.2px;color:#2067b0;font-weight:normal;">Если клиент будет осуществлять предоплату - выставите и отправьте ему счет</div>
<div class="t" style="left:1057px;top:976.29px;font-size:16.2px;color:#535c69;font-weight:normal;">Если клиент осуществляет предоплату заказа - выставите и отправьте ему счет. Далее передвиньте</div>
<div class="t" style="left:1057px;top:998.29px;font-size:16.2px;color:#535c69;font-weight:normal;">сделку в стадию "Выставлен счет"</div>
<svg style="left:1853px;top:916px" width="26" height="26" viewBox="0 0 40 40"><defs><clipPath id="avt904"><circle cx="20" cy="20" r="20"/></clipPath></defs><g clip-path="url(#avt904)"><rect width="40" height="40" fill="#a3a5a8"/><path d="M8 40C9 33 14 31 20 31C26 31 31 33 32 40Z" fill="#1e2b3d"/><rect x="16.5" y="25" width="7" height="7" fill="#b58a72"/><ellipse cx="20" cy="19" rx="7.2" ry="9.5" fill="#c79d84"/><path d="M12.5 17C12 9.5 16 7.5 20.5 7.5C25.5 7.5 28.5 10.5 27.5 17C26.5 13.5 24 12.5 20 12.5C16 12.5 14 13.5 12.5 17Z" fill="#6e5243"/></g></svg>
<div class="a" style="left:1014px;top:1053px;width:882px;height:152px;background:#fdfdf3;box-shadow:0 1px 1px rgba(0,0,0,0.05)"></div>
<div class="a" style="left:998px;top:1078px;width:16px;height:1px;background:#dfe3e6"></div>
<div class="a" style="left:960px;top:1059.5px;width:38px;height:38px;border-radius:50%;background:#9dcf00"></div>
<svg style="left:969px;top:1069px" width="20" height="18" viewBox="0 0 20 18"><path d="M5.5 1.5L7.3 4.8M14.5 1.5L12.7 4.8" stroke="#fff" stroke-width="1.6" stroke-linecap="round"/><path d="M2 10Q2 4.5 10 4.5Q18 4.5 18 10V13.5Q18 15.5 16 15.5H4Q2 15.5 2 13.5Z" fill="#fff"/><rect x="4.5" y="8" width="11" height="3.6" rx="1.8" fill="#9dcf00"/><circle cx="7.3" cy="9.8" r="1" fill="#fff"/><circle cx="12.7" cy="9.8" r="1" fill="#fff"/></svg>
<div class="a" style="left:985px;top:1050px;width:21px;height:21px;border-radius:50%;background:#f54819;border:2px solid #f3f5f3"></div>
<div class="t" style="left:991.5px;top:1055.27px;font-size:11.5px;color:#fff;font-weight:bold;">1</div>
<div class="a" style="left:1032px;top:1069px;width:16px;height:16px;border:1px solid #cfd4d8;border-radius:3px;background:#fff"></div>
<div class="t" style="left:1057px;top:1069.26px;font-size:16px;color:#222;font-weight:bold;">Задание</div>
<div class="t" style="left:1129px;top:1069.17px;font-size:16.1px;color:#a8adb4;font-weight:normal;">сегодня, 00:10</div>
<div class="t" style="left:1057px;top:1098.79px;font-size:16.2px;color:#2067b0;font-weight:normal;">Проверить всю информацию по заказу и отправить сделку в стадию "Передать в комплектацию и</div>
<div class="t" style="left:1057px;top:1120.79px;font-size:16.2px;color:#2067b0;font-weight:normal;">доставку"</div>
<div class="t" style="left:1057px;top:1147.29px;font-size:16.2px;color:#535c69;font-weight:normal;">Проверить всю информацию по заказу и отправить сделку в стадию "Передать в комплектацию и</div>
<div class="t" style="left:1057px;top:1169.29px;font-size:16.2px;color:#535c69;font-weight:normal;">доставку" для начала подготовки Комплектации</div>
<svg style="left:1853px;top:1065px" width="26" height="26" viewBox="0 0 40 40"><defs><clipPath id="avt1053"><circle cx="20" cy="20" r="20"/></clipPath></defs><g clip-path="url(#avt1053)"><rect width="40" height="40" fill="#a3a5a8"/><path d="M8 40C9 33 14 31 20 31C26 31 31 33 32 40Z" fill="#1e2b3d"/><rect x="16.5" y="25" width="7" height="7" fill="#b58a72"/><ellipse cx="20" cy="19" rx="7.2" ry="9.5" fill="#c79d84"/><path d="M12.5 17C12 9.5 16 7.5 20.5 7.5C25.5 7.5 28.5 10.5 27.5 17C26.5 13.5 24 12.5 20 12.5C16 12.5 14 13.5 12.5 17Z" fill="#6e5243"/></g></svg>
<div class="a" style="left:979px;top:1237px;width:917px;height:1px;background:#dfe3e6"></div>
<div class="a" style="left:1407px;top:1224px;width:96px;height:27px;border-radius:14px;background:#2fc6f6"></div>
<div class="t" style="left:1425px;top:1230.30px;font-size:15px;color:#fff;font-weight:bold;">сегодня</div>
<div class="a" style="left:1790px;top:1224px;width:106px;height:27px;border-radius:14px;background:#f6f8f9"></div>
<svg style="left:1803px;top:1231px" width="13" height="13" viewBox="0 0 13 13"><path d="M1 1.5H12L7.5 6.5V11.5L5.5 10V6.5Z" fill="#a8adb4"/></svg>
<div class="t" style="left:1824px;top:1231.00px;font-size:13px;color:#a8adb4;font-weight:bold;letter-spacing:0.4px">ФИЛЬТР</div>
<div class="a" style="left:1014px;top:1269px;width:882px;height:20px;background:#fff"></div>
<div class="a" style="left:962px;top:1271px;width:34px;height:34px;border-radius:50%;background:#a8adb4"></div>
</body></html>
